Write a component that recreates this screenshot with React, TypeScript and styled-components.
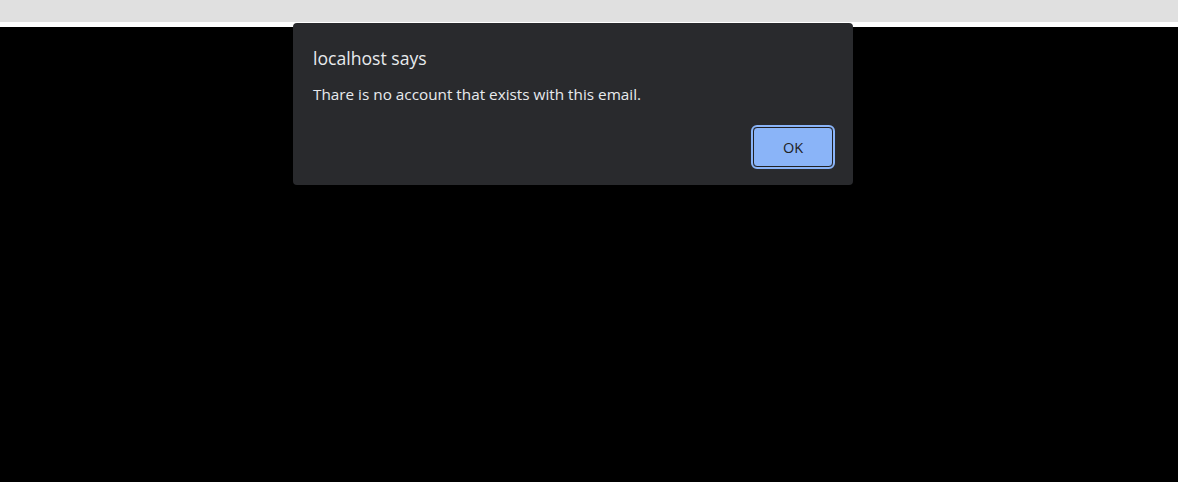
import React from "react";
import styled, { createGlobalStyle } from "styled-components";

const Global = createGlobalStyle`
  html, body { margin: 0; padding: 0; background: #000; }
  body { font-family: "Open Sans", "Noto Sans", sans-serif; }
`;

const Page = styled.div`
  position: relative;
  width: 1178px;
  height: 482px;
  display: flex;
  flex-direction: column;
  overflow: hidden;
`;

const TopBar = styled.div`
  height: 22px;
  background: #e0e0e0;
`;

const Strip = styled.div`
  height: 5px;
  background: #ffffff;
`;

const Content = styled.div`
  flex: 1;
  background: #000;
`;

const Dialog = styled.div`
  position: absolute;
  left: 293px;
  top: 23px;
  width: 560px;
  height: 162px;
  box-sizing: border-box;
  background: #292a2d;
  border-radius: 4px;
  padding: 23px 20px 0 20px;
  display: flex;
  flex-direction: column;
  color: #e8eaed;
`;

const Title = styled.div`
  font-size: 17.6px;
  line-height: 24px;
  color: #e8eaed;
`;

const Message = styled.div`
  margin-top: 14px;
  font-size: 15.3px;
  line-height: 20px;
  color: #e8eaed;
`;

const Actions = styled.div`
  display: flex;
  justify-content: flex-end;
  margin-top: 23px;
`;

const OkButton = styled.button`
  width: 80px;
  height: 40px;
  box-sizing: border-box;
  background: #8ab4f8;
  border: 1px solid #202124;
  border-radius: 4px;
  outline: 2px solid #8ab4f8;
  outline-offset: 0;
  font-family: "Open Sans", "Noto Sans", sans-serif;
  font-size: 14.5px;
  color: #202124;
  padding: 0;
  cursor: pointer;
`;

export default function App() {
  return (
    <>
      <Global />
      <Page>
        <TopBar />
        <Strip />
        <Content />
        <Dialog>
          <Title>localhost says</Title>
          <Message>Thare is no account that exists with this email.</Message>
          <Actions>
            <OkButton>OK</OkButton>
          </Actions>
        </Dialog>
      </Page>
    </>
  );
}
